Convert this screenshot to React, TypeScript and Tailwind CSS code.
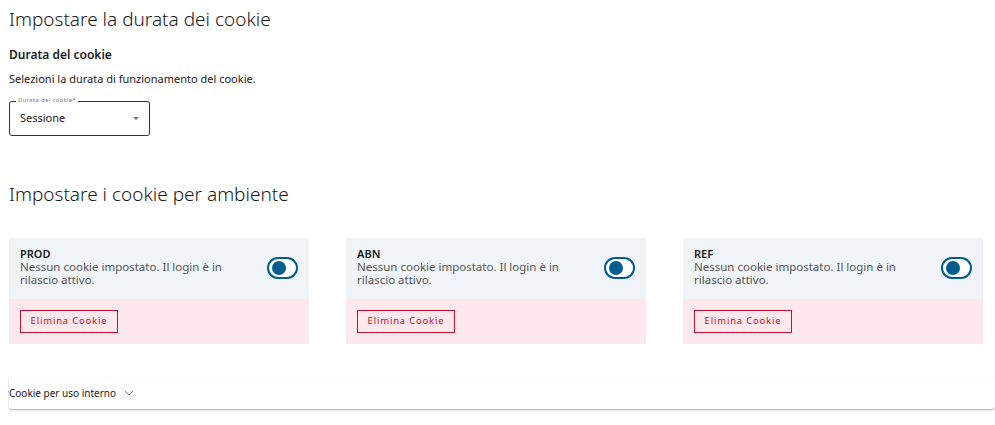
import React from "react";

const Card = ({ name }: { name: string }) => (
  <div className="w-[300px] flex flex-col">
    <div className="bg-[#f0f4f8] h-[61px] pl-[11px] pr-[11px] pt-[9px] flex justify-between">
      <div className="text-[11.5px] leading-[13px]">
        <div className="font-semibold text-[#1a1a1a] text-[11px]">{name}</div>
        <div className="text-[#555] w-[236px]">Nessun cookie impostato. Il login è in rilascio attivo.</div>
      </div>
      <div className="mt-[10px] w-[31px] h-[22px] rounded-full border-[2px] border-[#005e8f] bg-white flex items-center pl-[3px]">
        <div className="w-[14px] h-[14px] rounded-full bg-[#005e8f]" />
      </div>
    </div>
    <div className="bg-[#fde8ec] h-[45px] pl-[11px] pt-[11px]">
      <div className="w-[98px] h-[23px] border border-[#c8102e] text-[#c8102e] text-[9.5px] tracking-[0.8px] flex items-center justify-center">
        Elimina Cookie
      </div>
    </div>
  </div>
);

export default function App() {
  return (
    <div className="w-[995px] h-[425px] bg-white text-[#1a1a1a] overflow-hidden" style={{ fontFamily: '"Noto Sans", "Open Sans", sans-serif' }}>
      <div className="pl-[9px] pt-[6px]">
        <h1 className="text-[19px] leading-[26px] font-light text-[#1a1a1a]">Impostare la durata dei cookie</h1>
        <div className="mt-[15px] text-[12px] font-semibold leading-[16px]">Durata del cookie</div>
        <div className="mt-[9px] text-[11px] leading-[14px]">Selezioni la durata di funzionamento del cookie.</div>
        <div className="relative mt-[15px] w-[141px] h-[35px] border border-[#333] rounded-[3px] flex items-center pl-[10px] justify-between pr-[10px]">
          <span className="absolute -top-[6px] left-[6px] bg-white px-[2px] text-[6px] leading-[8px] text-[#777] tracking-[0.3px]">Durata del cookie*</span>
          <span className="text-[11px]">Sessione</span>
          <span className="w-0 h-0 border-l-[3px] border-r-[3px] border-t-[3px] border-l-transparent border-r-transparent border-t-[#777]" />
        </div>
        <h2 className="mt-[45px] text-[19px] leading-[26px] font-light">Impostare i cookie per ambiente</h2>
        <div className="mt-[31px] flex gap-[37px]">
          <Card name="PROD" />
          <Card name="ABN" />
          <Card name="REF" />
        </div>
      </div>
      <div className="mt-[33px] ml-[9px] h-[32px] flex items-center gap-[8px] rounded-[3px] shadow-[0_1px_2px_rgba(0,0,0,0.35)] text-[10px]">
        <span>Cookie per uso interno</span>
        <svg width="10" height="6" viewBox="0 0 10 6" fill="none" stroke="#777" strokeWidth="1"><path d="M1 1l4 4 4-4" /></svg>
      </div>
    </div>
  );
}
